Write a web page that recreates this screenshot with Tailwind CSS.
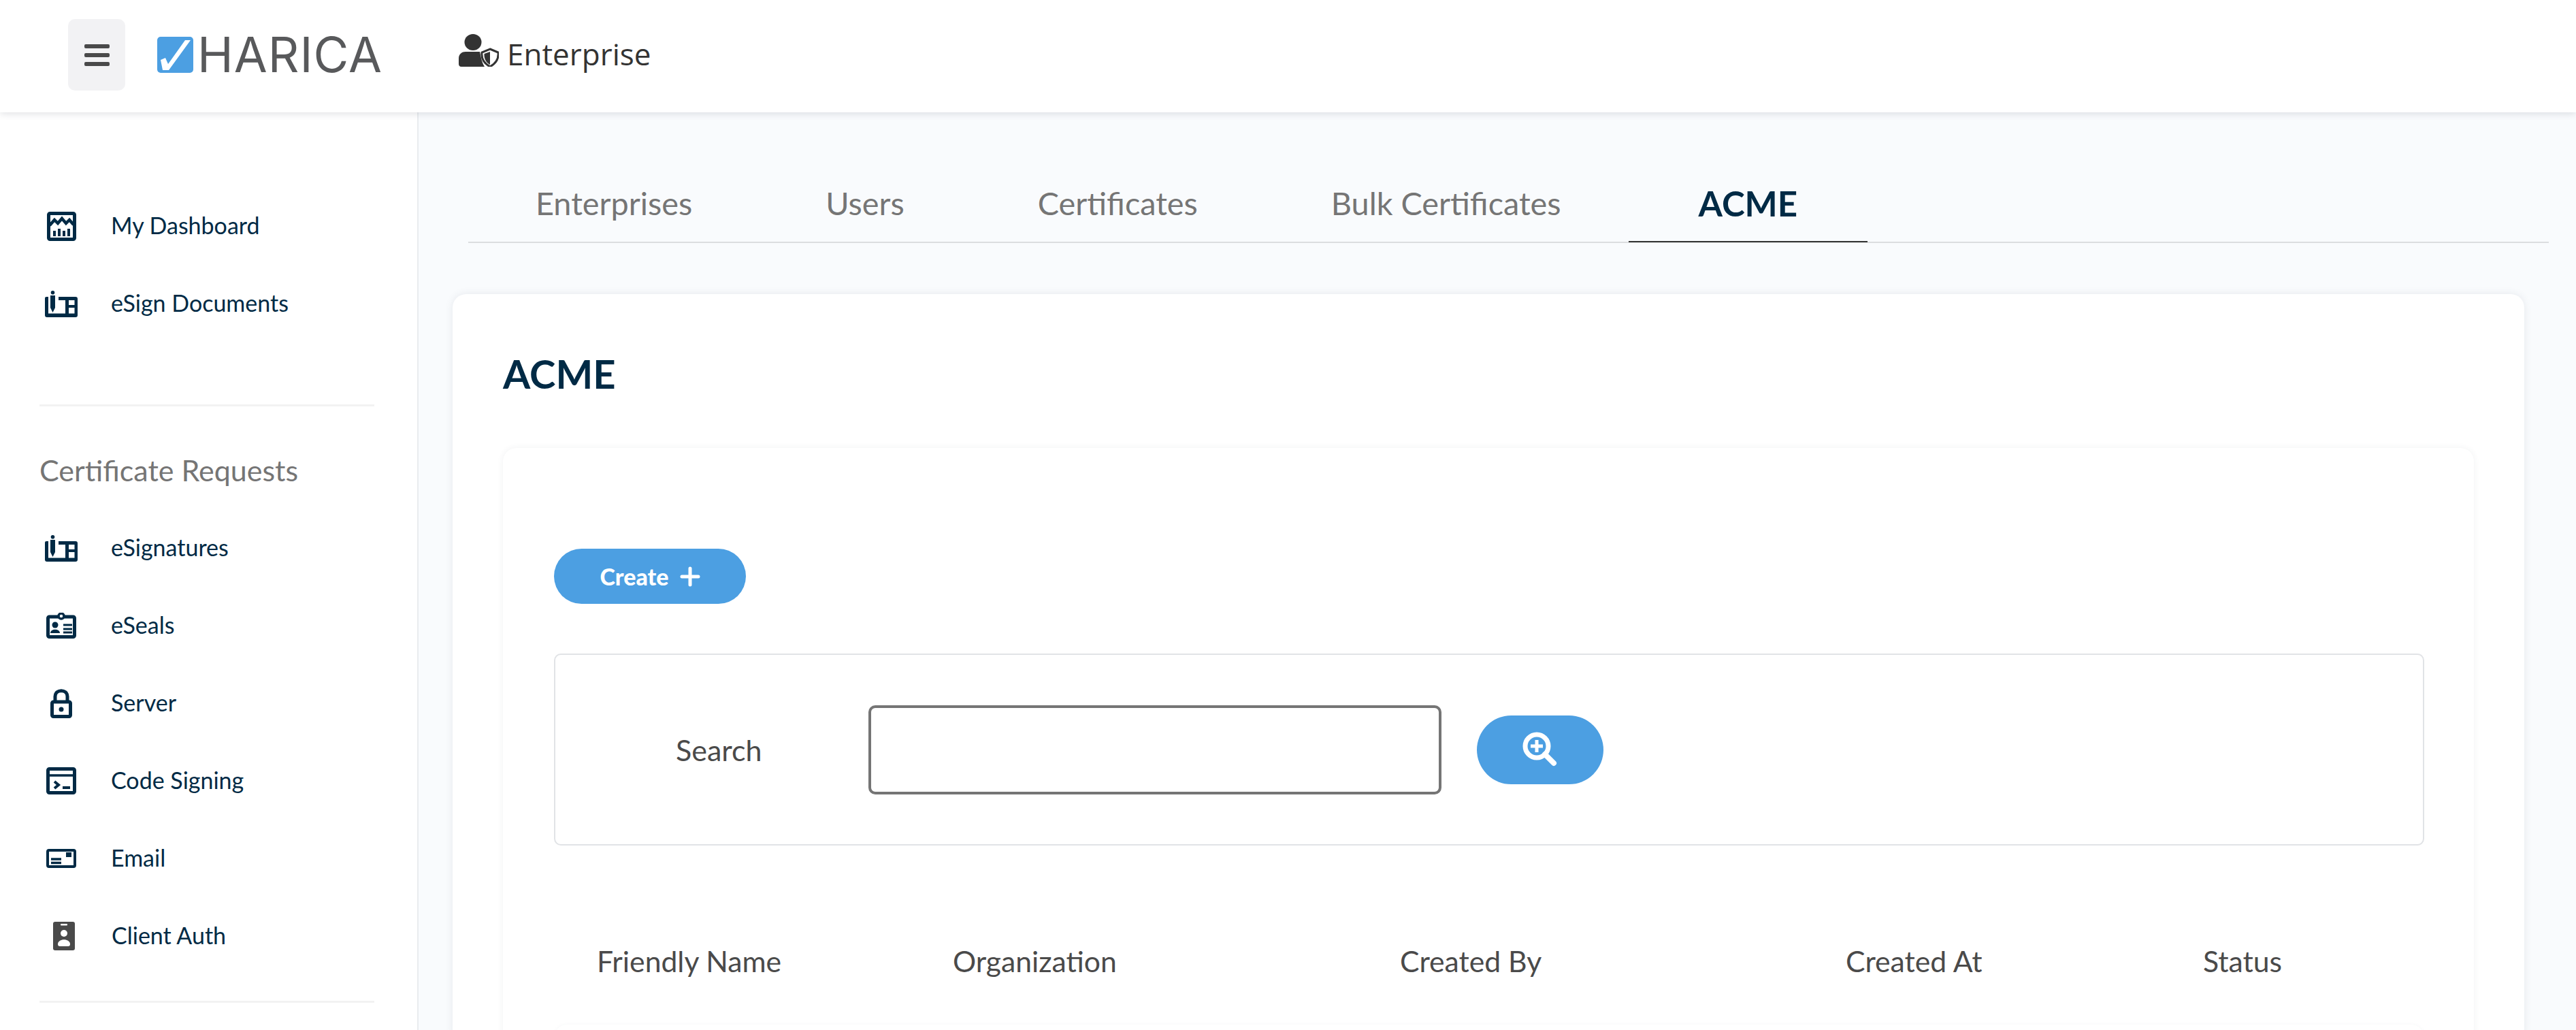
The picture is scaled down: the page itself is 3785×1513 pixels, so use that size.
<!DOCTYPE html>
<html lang="en">
<head>
    <meta charset="UTF-8">
    <title>HARICA Enterprise - ACME</title>
    <script src="https://cdn.jsdelivr.net/npm/@tailwindcss/browser@4"></script>
</head>
<body class="bg-[#f9fbfd] font-['Lato',sans-serif] text-[#002a45] h-[1513px] overflow-hidden">
    <!-- top bar -->
    <header class="relative z-10 h-[165px] bg-white flex items-start pl-[100px] pt-[28px] shadow-[0_2px_10px_rgba(60,70,90,0.16)]">
        <button class="w-[84px] h-[105px] rounded-[10px] bg-[#f2f2f4] flex flex-col items-center justify-center gap-[7px]">
            <span class="block w-[37px] h-[6px] rounded-[2px] bg-[#4a4a4a]"></span>
            <span class="block w-[37px] h-[6px] rounded-[2px] bg-[#4a4a4a]"></span>
            <span class="block w-[37px] h-[6px] rounded-[2px] bg-[#4a4a4a]"></span>
        </button>
        <div class="flex items-center ml-[47px] mt-[26px] h-[53px]">
            <svg width="53" height="53" viewBox="0 0 53 53">
                <rect width="53" height="53" rx="5" fill="#4c9fe2"/>
                <path d="M5 34 L12 31 L16 40 L41 5 L49 5 L17 49 L8 49 Z" fill="#fff"/>
            </svg>
            <span class="ml-[6px] font-['Inter',sans-serif] text-[71px] leading-[53px] tracking-[1px] text-[#58595b]">HARICA</span>
        </div>
        <div class="flex items-center ml-[112px] mt-[22px] h-[48px]">
            <svg width="59" height="48" viewBox="0 0 59 48">
                <ellipse cx="21" cy="12" rx="12.5" ry="12" fill="#333"/>
                <path d="M0 44 V36 C0 29 5 26 10 26 H31 C32 30 33 40 38 48 H4 C1 48 0 46 0 44 Z" fill="#333"/>
                <path d="M46 22 L58 27 C59 36 55 43 46 48 C37 43 33 36 34 27 Z" fill="#fff" stroke="#333" stroke-width="3"/>
                <path d="M46 26 V45 C40 42 37 36 37.500 29 Z" fill="#333"/>
            </svg>
            <span class="ml-[12px] mt-[10px] font-['Open_Sans',sans-serif] text-[44px] leading-[48px] text-[#333]">Enterprise</span>
        </div>
    </header>

    <div class="flex h-[1348px]">
        <!-- sidebar -->
        <aside class="w-[615px] shrink-0 bg-white border-r-2 border-[#e9ecef] pt-[110px] text-[34px]">
            <nav>
                <a class="flex items-center h-[114px] pl-[58px]">
                    <span class="w-[64px] flex justify-center">
                        <svg width="43" height="43" viewBox="0 0 43 43" fill="none" stroke="#002a45">
                            <rect x="2.500" y="2.500" width="38" height="38" rx="2" stroke-width="5"/>
                            <path d="M4 20 L11 12 L16 17 L22 10 L28 17 L33 12 L39 19" stroke-width="4.500"/>
                            <path d="M11 28 V36 M18 25 V36 M25 28 V36 M32 25 V36" stroke-width="4"/>
                        </svg>
                    </span>
                    <span class="ml-[41px] pb-[3px]">My Dashboard</span>
                </a>
                <a class="flex items-center h-[114px] pl-[58px]">
                    <span class="w-[64px] flex justify-center">
                        <svg width="48" height="39" viewBox="0 0 48 39" fill="#002a45">
                            <path fill-rule="evenodd" d="M2 9 H5 V33.500 H30 V14 H20 V9 H45 Q48 9 48 12 V36 Q48 39 45 39 H3 Q0 39 0 36 V11 Q0 9 2 9 Z M35 14 V21 H43.500 V14 Z M35 25 V33.500 H43.500 V25 Z"/>
                            <circle cx="11.500" cy="2.800" r="2.800"/>
                            <path d="M8 7 H15 V25 L11.500 32 L8 25 Z"/>
                        </svg>
                    </span>
                    <span class="ml-[41px] pb-[3px]">eSign Documents</span>
                </a>
            </nav>
            <div class="ml-[58px] mr-[63px] mt-[91px] border-t-[3px] border-[#f2f2f2]"></div>
            <h3 class="mx-[58px] pt-[68px] h-[151px] text-[43px] leading-[52px] text-[#757575]">Certificate Requests</h3>
            <nav>
                <a class="flex items-center h-[114px] pl-[58px]">
                    <span class="w-[64px] flex justify-center">
                        <svg width="48" height="39" viewBox="0 0 48 39" fill="#002a45">
                            <path fill-rule="evenodd" d="M2 9 H5 V33.500 H30 V14 H20 V9 H45 Q48 9 48 12 V36 Q48 39 45 39 H3 Q0 39 0 36 V11 Q0 9 2 9 Z M35 14 V21 H43.500 V14 Z M35 25 V33.500 H43.500 V25 Z"/>
                            <circle cx="11.500" cy="2.800" r="2.800"/>
                            <path d="M8 7 H15 V25 L11.500 32 L8 25 Z"/>
                        </svg>
                    </span>
                    <span class="ml-[41px] pb-[3px]">eSignatures</span>
                </a>
                <a class="flex items-center h-[114px] pl-[58px]">
                    <span class="w-[64px] flex justify-center">
                        <svg width="44" height="38" viewBox="0 0 44 38">
                            <rect x="2.500" y="6" width="39" height="29.500" rx="2" fill="none" stroke="#002a45" stroke-width="5"/>
                            <circle cx="22" cy="5" r="4" fill="#fff" stroke="#002a45" stroke-width="3.500"/>
                            <circle cx="13" cy="18" r="4.500" fill="#002a45"/>
                            <path d="M6 30 C6 23 20 23 20 30 Z" fill="#002a45"/>
                            <path d="M25 18 H38 M25 24 H38 M25 29 H38" stroke="#002a45" stroke-width="3"/>
                        </svg>
                    </span>
                    <span class="ml-[41px] pb-[3px]">eSeals</span>
                </a>
                <a class="flex items-center h-[114px] pl-[58px]">
                    <span class="w-[64px] flex justify-center">
                        <svg width="32" height="43" viewBox="0 0 32 43" fill="none" stroke="#002a45" stroke-width="5">
                            <rect x="2.500" y="19" width="27" height="21.500" rx="2"/>
                            <path d="M7 19 V11 C7 0 25 0 25 11 V19"/>
                            <circle cx="16" cy="30" r="3.500" fill="#002a45" stroke="none"/>
                        </svg>
                    </span>
                    <span class="ml-[41px] pb-[3px]">Server</span>
                </a>
                <a class="flex items-center h-[114px] pl-[58px]">
                    <span class="w-[64px] flex justify-center">
                        <svg width="44" height="40" viewBox="0 0 44 40" fill="none" stroke="#002a45">
                            <rect x="2.500" y="2.500" width="39" height="35" rx="2" stroke-width="5"/>
                            <path d="M3 12 H41" stroke-width="3.500"/>
                            <path d="M9 7 H12 M17 7 H20 M24 7 H27" stroke="#fff" stroke-width="3"/>
                            <path d="M12 21 L18 26 L12 31" stroke-width="4"/>
                            <path d="M24 30 H35" stroke-width="4"/>
                        </svg>
                    </span>
                    <span class="ml-[41px] pb-[3px]">Code Signing</span>
                </a>
                <a class="flex items-center h-[114px] pl-[58px]">
                    <span class="w-[64px] flex justify-center">
                        <svg width="44" height="28" viewBox="0 0 44 28" fill="none" stroke="#002a45">
                            <rect x="2" y="2" width="40" height="24" rx="2" stroke-width="4"/>
                            <path d="M7 15 H22 M7 20.500 H22" stroke-width="3.500"/>
                            <rect x="29" y="5" width="8" height="7" fill="#002a45" stroke="none"/>
                        </svg>
                    </span>
                    <span class="ml-[41px] pb-[3px]">Email</span>
                </a>
                <a class="flex items-center h-[114px] pl-[58px]">
                    <span class="w-[64px] flex justify-center pl-[8px]">
                        <svg width="32" height="42" viewBox="0 0 32 42">
                            <rect width="32" height="42" rx="3" fill="#4a4a4a"/>
                            <rect x="11" y="3" width="10" height="2.500" rx="1" fill="#fff"/>
                            <circle cx="16" cy="17" r="5" fill="#fff"/>
                            <path d="M7 33 C7 24 25 24 25 33 C25 35 24 36 22 36 H10 C8 36 7 35 7 33 Z" fill="#fff"/>
                        </svg>
                    </span>
                    <span class="ml-[42px] pb-[3px]">Client Auth</span>
                </a>
            </nav>
            <div class="ml-[58px] mr-[63px] mt-[38px] border-t-[3px] border-[#f2f2f2]"></div>
        </aside>

        <!-- main -->
        <main class="flex-1 min-w-0">
            <div class="ml-[73px] mr-[40px] mt-[110px] flex h-[82px] border-b-2 border-[#dcdee0] text-[46.800px] leading-[47px] text-[#757575]">
                <a class="pl-[99px] pr-[98px] h-[82px]">Enterprises</a>
                <a class="px-[98px] h-[82px]">Users</a>
                <a class="px-[98px] h-[82px]">Certificates</a>
                <a class="pl-[98px] pr-[99px] h-[82px]">Bulk Certificates</a>
                <a class="px-[103px] h-[81px] border-b-2 border-[#333] text-[51px] font-bold text-[#002a45]">ACME</a>
            </div>

            <section class="ml-[50px] mr-[76px] mt-[75px] bg-white rounded-[20px] shadow-[0_0_12px_rgba(60,70,90,0.1)] px-[74px] pt-[95px] h-[1100px]">
                <h1 class="text-[58px] leading-[44px] font-bold text-[#002a45]">ACME</h1>
                <div class="mt-[87px] bg-white rounded-[20px] shadow-[0_0_10px_rgba(60,70,90,0.07)] pl-[75px] pr-[73px] pt-[148px] h-[900px]">
                    <button class="flex items-center justify-center gap-[16px] w-[282px] h-[81px] rounded-full bg-[#4c9fe2] text-white text-[34px] font-black">
                        Create
                        <svg width="30" height="30" viewBox="0 0 30 30" fill="none" stroke="#fff" stroke-width="5" stroke-linecap="round"><path d="M15 3 V27 M3 15 H27"/></svg>
                    </button>
                    <div class="mt-[73px] h-[282px] border-2 border-[#e1e3e6] rounded-[10px] flex items-center">
                        <label class="w-[460px] pl-[177px] pt-[3px] text-[43px] text-[#4a4a4a]">Search</label>
                        <input class="w-[842px] h-[131px] bg-white border-[4px] border-[#757575] rounded-[10px]" type="text">
                        <button class="ml-[52px] w-[186px] h-[101px] rounded-full bg-[#4c9fe2] flex items-center justify-center">
                            <svg width="52" height="52" viewBox="0 0 52 52" fill="none" stroke="#fff">
                                <circle cx="21" cy="21" r="17" stroke-width="7"/>
                                <path d="M33 33 L46 46" stroke-width="8" stroke-linecap="round"/>
                                <path d="M21 12 V30 M12 21 H30" stroke-width="5"/>
                            </svg>
                        </button>
                    </div>
                    <div class="mt-[143px] flex text-[42.700px] leading-[54px] text-[#4a4a4a]">
                        <span class="w-[586px] pl-[63px]">Friendly Name</span>
                        <span class="w-[657px]">Organization</span>
                        <span class="w-[655px]">Created By</span>
                        <span class="w-[525px]">Created At</span>
                        <span>Status</span>
                    </div>
                    <div class="mt-[66px] h-[60px] rounded-[20px] bg-white shadow-[0_0_6px_rgba(60,70,90,0.04)]"></div>
                </div>
            </section>
        </main>
    </div>
</body>
</html>
